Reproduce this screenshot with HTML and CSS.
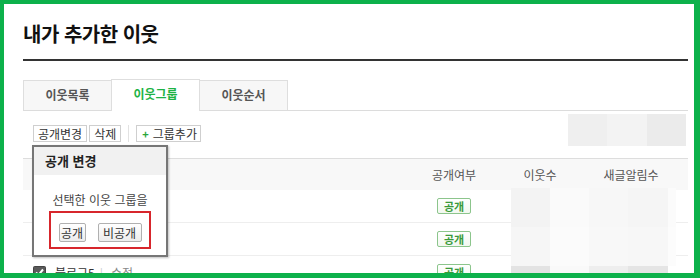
FILE: index.html
```html
<!DOCTYPE html>
<html lang="ko">
<head>
    <meta charset="UTF-8">
    <meta name="viewport" content="width=device-width, initial-scale=1.0">
    <title>내가 추가한 이웃</title>
    <link rel="stylesheet" href="styles.css">
</head>
<body>
    <div class="frame">
        <div class="page">
            <div class="title">
                <h1>내가 추가한 이웃</h1>
            </div>

            <ul class="tabs">
                <li class="tab">이웃목록</li>
                <li class="tab active">이웃그룹</li>
                <li class="tab">이웃순서</li>
            </ul>

            <div class="toolbar">
                <button class="tool-btn">공개변경</button>
                <button class="tool-btn tool-gap">삭제</button>
                <span class="tool-sep"></span>
                <button class="tool-btn tool-add"><span class="plus">+</span>그룹추가</button>
                <div class="blur blur-top">
                    <span class="b1"></span><span class="b2"></span><span class="b3"></span>
                </div>

                <div class="popup">
                    <div class="popup-head">공개 변경</div>
                    <div class="popup-body">
                        <p>선택한 이웃 그룹을</p>
                        <div class="popup-choice">
                            <button class="choice-btn choice-open">공개</button>
                            <button class="choice-btn choice-close">비공개</button>
                        </div>
                    </div>
                </div>
            </div>

            <div class="table">
                <div class="row head">
                    <div class="cell name"></div>
                    <div class="cell">공개여부</div>
                    <div class="cell">이웃수</div>
                    <div class="cell">새글알림수</div>
                    <div class="cell"></div>
                </div>
                <div class="row">
                    <div class="cell name"></div>
                    <div class="cell"><span class="badge">공개</span></div>
                    <div class="cell"></div>
                    <div class="cell"></div>
                    <div class="cell"></div>
                </div>
                <div class="row">
                    <div class="cell name"></div>
                    <div class="cell"><span class="badge">공개</span></div>
                    <div class="cell"></div>
                    <div class="cell"></div>
                    <div class="cell"></div>
                </div>
                <div class="row">
                    <div class="cell name">
                        <svg class="check" width="13" height="13" viewBox="0 0 13 13">
                            <rect x="0.5" y="0.5" width="12" height="12" rx="1" fill="#5a5a5a" stroke="#444"/>
                            <polyline points="3,6.5 5.5,9 10,3.5" fill="none" stroke="#fff" stroke-width="2"/>
                        </svg>
                        <span class="group-name">블로그5</span>
                        <span class="bar">|</span>
                        <span class="edit">수정</span>
                    </div>
                    <div class="cell"><span class="badge">공개</span></div>
                    <div class="cell"></div>
                    <div class="cell"></div>
                    <div class="cell"></div>
                </div>

                <div class="blur blur-table">
                    <span style="background:#f3f3f3"></span><span style="background:#fafafa"></span><span style="background:#f7f7f7"></span><span style="background:#f5f5f5"></span><span style="background:#fbfbfb"></span>
                    <span style="background:#f6f6f6"></span><span style="background:#fbfbfb"></span><span style="background:#f8f8f8"></span><span style="background:#f7f7f7"></span><span style="background:#fcfcfc"></span>
                    <span style="background:#e3e3e3"></span><span style="background:#f9f9f9"></span><span style="background:#eeeeee"></span><span style="background:#e5e5e5"></span><span style="background:#ffffff"></span>
                </div>
            </div>
        </div>
    </div>
</body>
</html>
```

FILE: styles.css
```css
* {
    margin: 0;
    padding: 0;
    box-sizing: border-box;
}

body {
    font-family: "Noto Sans CJK KR", "Noto Sans", "Liberation Sans", sans-serif;
    background: white;
    color: #333;
}

.frame {
    width: 700px;
    height: 278px;
    border-style: solid;
    border-color: #0db14b;
    border-width: 4px 6px 5px 4px;
    overflow: hidden;
}

.page {
    padding: 17px 6px 0 19px;
}

.title {
    padding-bottom: 12px;
    border-bottom: 2px solid #333;
}

.title h1 {
    font-size: 20px;
    line-height: 26px;
    font-weight: 700;
    color: #111;
    letter-spacing: -0.5px;
}

.tabs {
    list-style: none;
    display: flex;
    margin-top: 19px;
    height: 31px;
    border-bottom: 1px solid #dcdcdc;
}

.tab {
    width: 89px;
    height: 30px;
    margin-right: -1px;
    border: 1px solid #dedede;
    border-bottom: none;
    background: #f7f7f7;
    text-align: center;
    font-size: 12px;
    line-height: 28px;
    font-weight: 700;
    color: #555;
}

.tab.active {
    position: relative;
    height: 32px;
    margin-top: -1px;
    background: white;
    color: #1db345;
}

.toolbar {
    position: relative;
    display: flex;
    align-items: flex-start;
    height: 47px;
    padding-left: 10px;
}

.tool-btn {
    margin-top: 14px;
    height: 17px;
    padding: 0 4px;
    border: 1px solid #cfcfcf;
    background: white;
    font-family: inherit;
    font-size: 12px;
    line-height: 15px;
    color: #333;
}

.tool-gap {
    margin-left: 2px;
}

.tool-sep {
    width: 1px;
    height: 17px;
    margin: 14px 7px 0;
    background: #e2e2e2;
}

.tool-add {
    padding: 0 3px 0 2px;
}

.plus {
    color: #2aa63a;
    font-weight: 700;
    font-size: 11px;
    margin: 0 4px 0 3px;
}

.blur {
    display: grid;
}

.blur-top {
    margin: 3px 2px 0 auto;
    grid-template-columns: 39px 40px 39px;
    height: 32px;
}

.blur-top .b1 { background: #efefef; }
.blur-top .b2 { background: #f3f3f3; }
.blur-top .b3 { background: #ebebeb; }

.popup {
    position: absolute;
    left: 9px;
    top: 34px;
    width: 136px;
    border: 2px solid #767676;
    background: white;
    box-shadow: 1px 1px 2px rgba(0,0,0,0.25);
    z-index: 2;
}

.popup-head {
    height: 28px;
    padding-left: 11px;
    background: #f1f1f1;
    font-size: 13px;
    font-weight: 700;
    line-height: 28px;
    color: #222;
}

.popup-body {
    padding: 18px 0 6px;
    text-align: center;
}

.popup-body p {
    font-size: 12px;
    line-height: 14px;
    color: #444;
}

.popup-choice {
    display: flex;
    justify-content: center;
    gap: 12px;
    width: 102px;
    height: 38px;
    margin: 4px auto 0;
    padding-top: 10px;
    border: 2px solid #d7262c;
}

.choice-btn {
    height: 19px;
    border: 1px solid #b0b0b0;
    border-radius: 2px;
    background: linear-gradient(#ffffff, #ececec);
    font-family: inherit;
    font-size: 12px;
    line-height: 17px;
    color: #333;
}

.choice-open {
    width: 27px;
}

.choice-close {
    width: 44px;
}

.table {
    position: relative;
    border-top: 1px solid #dddddd;
}

.row {
    display: grid;
    grid-template-columns: 397px 68px 104px 78px 18px;
    height: 33px;
    border-bottom: 1px solid #eeeeee;
    font-size: 12px;
    color: #333;
}

.row.head {
    height: 31px;
    background: #f8f8f8;
    border-bottom: none;
    color: #555;
}

.cell {
    display: flex;
    align-items: center;
    justify-content: center;
}

.cell.name {
    justify-content: flex-start;
    padding-left: 10px;
}

.check {
    margin-right: 9px;
}

.group-name {
    color: #333;
}

.bar {
    margin: 0 8px 0 5px;
    color: #ccc;
}

.edit {
    color: #888;
}

.badge {
    display: inline-block;
    width: 34px;
    height: 16px;
    border: 1px solid #8cc58c;
    border-radius: 2px;
    background: linear-gradient(#ffffff, #f2f8f0);
    font-size: 11px;
    line-height: 14px;
    font-weight: 700;
    color: #3a9a3a;
    text-align: center;
}

.blur-table {
    position: absolute;
    left: 488px;
    top: 29px;
    width: 165px;
    grid-template-columns: 39px 39px 39px 40px 8px;
    grid-template-rows: 39px 39px 39px;
}
```
